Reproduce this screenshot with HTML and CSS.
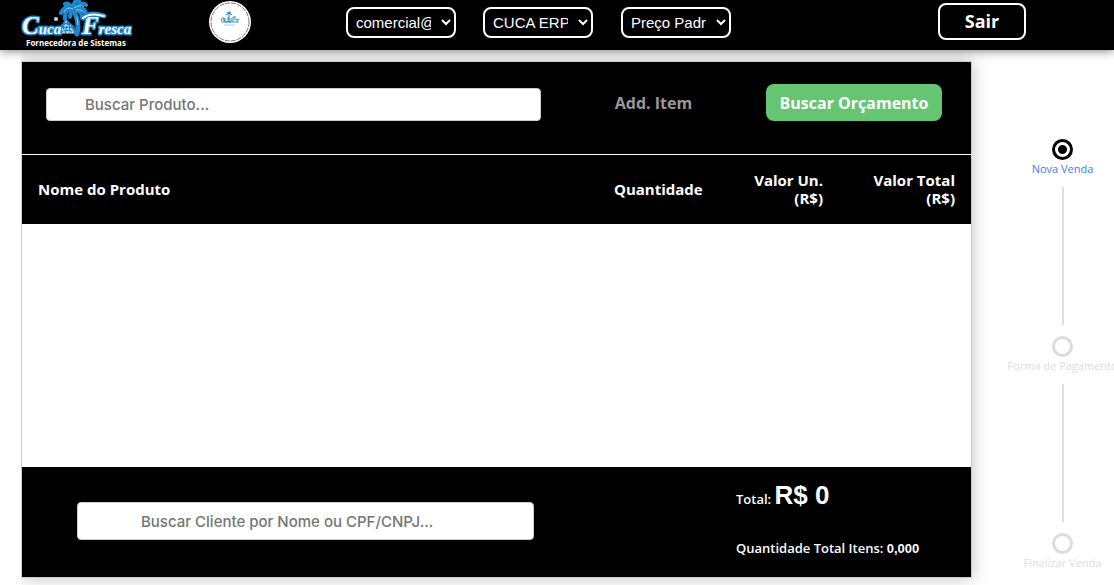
FILE: index.html
```html
<!DOCTYPE html>
<html lang="pt-br">

<head>
    <meta charset="UTF-8" />
    <meta name="viewport" content="width=device-width, initial-scale=1" />
    <title>Nova Venda</title>
    <link rel="stylesheet" href="styles.css">
</head>

<body>
    <header class="topo">
        <a href="#" class="logo" aria-label="Cuca Fresca">
            <svg width="120" height="48" viewBox="0 0 120 48">
                <!-- palmeira -->
                <g fill="none" stroke="#1f86cc" stroke-linecap="round">
                    <path d="M54 12 Q60 22 57 34" stroke-width="5" />
                    <path d="M54 9 Q46 3 41 13 M54 9 Q44 8 45 19 M53 8 Q48 2 45 4 M54 8 Q53 0 59 1 M54 9 Q62 1 66 5 M54 10 Q65 6 66 14 M54 10 Q62 10 62 18 M53 10 Q50 12 50 17" stroke-width="4" />
                </g>
                <path d="M53 9 Q47 6 44 12 M54 8 Q60 4 64 7 M56 10 Q62 9 64 13 M57 17 L58 25" stroke="#8cc8ee" stroke-width="1" fill="none" />
                <!-- castelo de areia -->
                <path d="M38 34 L40 26 L43 23 L46 18 L50 23 L54 26 L57 34Z" fill="#1f86cc" />
                <path d="M40 32h15M41 29h12M44 26h7M46 21v5M43 29v4M48 28v5M52 29v4" stroke="#fff" stroke-width="1" stroke-dasharray="2 1" fill="none" />
                <circle cx="36" cy="19" r="2" fill="#b9ddf3" />
                <text x="2" y="34" class="logo-inicial">C<tspan class="logo-nome">uca</tspan></text>
                <text x="62" y="34" class="logo-inicial">F<tspan class="logo-nome">resca</tspan></text>
                <path d="M63 18 Q70 11 84 16" stroke="#1f86cc" stroke-width="5" stroke-linecap="round" fill="none" />
                <path d="M63 18 Q70 12 84 16" stroke="#fff" stroke-width="2" stroke-linecap="round" fill="none" />
                <text x="6" y="46" class="logo-sub">Fornecedora de Sistemas</text>
            </svg>
        </a>
        <div class="avatar">
            <svg width="42" height="42" viewBox="0 0 42 42">
                <circle cx="21" cy="21" r="21" fill="#fff" />
                <circle cx="21" cy="21" r="19" fill="none" stroke="#777" stroke-width="1" stroke-dasharray="5 1" />
                <path d="M20 12v9M18 12l2-1 2 1M17 14l3-2 3 2" stroke="#1f7fb8" stroke-width="1" fill="none" />
                <path d="M12 20q1-4 3-3v4M16 17v4h2M19 16v5h3v-4M24 21v-5h3M25 18h2M28 18v3M28 19l2-1" stroke="#2a83b5" stroke-width="1" fill="none" />
                <path d="M12 21h18" stroke="#4c9bc6" stroke-width="1" />
                <path d="M15 24h11" stroke="#a3d2e6" stroke-width="1" />
            </svg>
        </div>
        <select class="seletor" aria-label="Usuário">
            <option>comercial@</option>
        </select>
        <select class="seletor" aria-label="Empresa">
            <option>CUCA ERP</option>
        </select>
        <select class="seletor" aria-label="Tabela de preço">
            <option>Preço Padrão</option>
        </select>
        <button type="button" class="btn-sair">Sair</button>
    </header>

    <div class="pagina">
        <main class="cartao">
            <div class="barra-busca">
                <input type="text" class="campo campo-produto" placeholder="Buscar Produto..." aria-label="Buscar Produto">
                <button type="button" class="btn-add" disabled>Add. Item</button>
                <button type="button" class="btn-orcamento">Buscar Orçamento</button>
            </div>

            <div class="lista">
                <table class="tabela-itens">
                    <thead>
                        <tr>
                            <th class="col-nome">Nome do Produto</th>
                            <th class="col-qtd">Quantidade</th>
                            <th class="col-valor">Valor Un. (R$)</th>
                            <th class="col-total">Valor Total (R$)</th>
                        </tr>
                    </thead>
                    <tbody></tbody>
                </table>
            </div>

            <div class="rodape">
                <input type="text" class="campo campo-cliente" placeholder="Buscar Cliente por Nome ou CPF/CNPJ..." aria-label="Buscar Cliente">
                <div class="totais">
                    <p class="total">Total: <span class="total-valor">R$ 0</span></p>
                    <p class="total-itens">Quantidade Total Itens: <span class="numero">0,000</span></p>
                </div>
            </div>
        </main>

        <ol class="etapas">
            <li class="etapa etapa-ativa"><span class="bolinha"></span><span class="etapa-nome">Nova Venda</span></li>
            <li class="etapa"><span class="bolinha"></span><span class="etapa-nome">Forma de Pagamento</span></li>
            <li class="etapa"><span class="bolinha"></span><span class="etapa-nome">Finalizar Venda</span></li>
        </ol>
    </div>
</body>

</html>
```
FILE: styles.css
```css
* {
    box-sizing: border-box;
}

body {
    margin: 0;
    background-color: white;
    font-family: "Open Sans", sans-serif;
    overflow: hidden;
}

.topo {
    position: relative;
    display: grid;
    grid-template-columns: 189fr 137fr 137fr 138fr 317fr 156fr;
    align-items: start;
    justify-items: start;
    height: 50px;
    padding: 0 20px;
    background-color: black;
    box-shadow: 0 0 10px rgba(0, 0, 0, 0.6);
}

.logo,
.avatar {
    display: block;
    line-height: 0;
}

.avatar {
    margin-top: 1px;
}

.logo-inicial {
    font: italic bold 25px "Liberation Serif", serif;
    fill: white;
    stroke: #1f86cc;
    stroke-width: 3px;
    stroke-linejoin: round;
    paint-order: stroke;
}

.logo-nome {
    font-size: 15px;
}

.logo-sub {
    font: bold 8px "Open Sans", sans-serif;
    fill: white;
}

.seletor {
    width: 110px;
    height: 31px;
    margin-top: 7px;
    padding: 0 7px 0 4px;
    border: 2px solid white;
    border-radius: 8px;
    background-color: black;
    color: white;
    font: 15px "Liberation Sans", Arial, sans-serif;
}

.btn-sair {
    width: 88px;
    height: 37px;
    margin-top: 3px;
    padding: 0 0 2px;
    border: 2px solid white;
    border-radius: 8px;
    background-color: black;
    color: white;
    font: bold 18px "Open Sans", sans-serif;
}

.pagina {
    display: grid;
    grid-template-columns: minmax(0, 951fr) minmax(0, 142fr);
    align-items: start;
    padding: 11px 0 7px 21px;
}

.cartao {
    border: 1px solid #ccc;
    box-shadow: 0 0 16px rgba(0, 0, 0, 0.25);
    clip-path: inset(-11px -24px -24px 0);
}

.barra-busca {
    display: grid;
    grid-template-columns: 1fr 225px 176px;
    align-items: start;
    padding: 22px 29px 33px 24px;
    border-bottom: 1px solid white;
    background-color: black;
}

.campo {
    width: 100%;
    border: 1px solid #ccc;
    border-radius: 4px;
    background-color: white;
    color: #333;
    font: 500 15px Inter, sans-serif;
}

.campo::placeholder {
    color: #757575;
}

.campo-produto {
    height: 33px;
    margin-top: 4px;
    padding: 0 38px;
}

.campo-cliente {
    height: 38px;
    margin-top: 35px;
    padding: 0 63px;
}

.btn-add,
.btn-orcamento {
    height: 37px;
    padding: 0;
    border: none;
    border-radius: 8px;
    font: bold 16px "Open Sans", sans-serif;
}

.btn-add {
    background-color: transparent;
    color: #999;
}

.btn-orcamento {
    background-color: #66c572;
    color: white;
}

.lista {
    min-height: 312px;
    background-color: white;
}

.tabela-itens {
    width: 100%;
    border-collapse: collapse;
    table-layout: fixed;
}

.tabela-itens th {
    height: 69px;
    padding: 0 16px 2px;
    background-color: black;
    color: white;
    font-size: 15px;
    line-height: 18px;
    text-align: right;
}

.tabela-itens .col-nome {
    text-align: left;
}

.col-qtd {
    width: 120px;
}

.col-valor {
    width: 121px;
}

.col-total {
    width: 132px;
}

.rodape {
    display: grid;
    grid-template-columns: 457fr 235fr;
    column-gap: 202px;
    align-items: start;
    min-height: 110px;
    padding-left: 55px;
    background-color: black;
    color: white;
}

.totais {
    padding-top: 12px;
    font-size: 13px;
    font-weight: 600;
}

.totais p {
    margin: 0;
}

.total {
    line-height: 32px;
}

.total-valor {
    font-family: "Liberation Sans", Arial, sans-serif;
    font-size: 26px;
    font-weight: bold;
}

.totais .total-itens {
    margin-top: 23px;
    line-height: 20px;
}

.numero {
    font-family: "Liberation Sans", Arial, sans-serif;
    font-weight: bold;
}

.etapas {
    display: flex;
    flex-direction: column;
    margin: 78px 0 0;
    padding: 0 0 0 38px;
    list-style: none;
}

.etapa {
    display: flex;
    flex-direction: column;
    align-items: center;
    width: 105px;
    color: #ddd;
    font-size: 11px;
    line-height: 16px;
    white-space: nowrap;
}

/* linha entre as etapas */
.etapa:not(:last-child)::after {
    content: "";
    width: 2px;
    height: 138px;
    margin: 10px 0 11px;
    background-color: #ddd;
}

.bolinha {
    width: 21px;
    height: 21px;
    margin-bottom: 1px;
    border: 3px solid #ddd;
    border-radius: 50%;
}

.etapa-ativa .bolinha {
    border-color: black;
    background: radial-gradient(circle, black 4px, white 5px);
}

.etapa-ativa .etapa-nome {
    color: #3b7cf5;
}
```
